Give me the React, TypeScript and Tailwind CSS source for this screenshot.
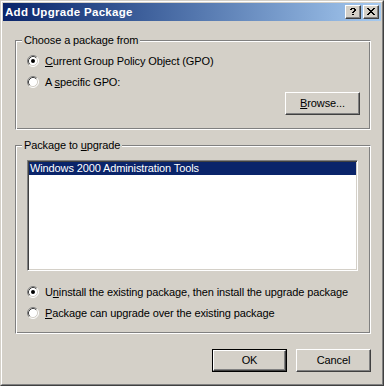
import React from "react";

function PixelGlyph({ rows, x, y }: { rows: string[]; x: number; y: number }) {
  const rects: React.ReactElement[] = [];
  rows.forEach((r, j) => {
    r.split("").forEach((c, i) => {
      if (c === "#") rects.push(<rect key={`${i}-${j}`} x={x + i} y={y + j} width={1} height={1} fill="#000" />);
    });
  });
  return <>{rects}</>;
}

const CLOSE = ["##....##", ".##..##.", "..####..", "...##...", "..####..", ".##..##.", "##....##"];
const HELP = [".####.", "##..##", "....##", "...##.", "..##..", "......", "..##.."];

function CaptionButton({ glyph, w }: { glyph: string[]; w: number }) {
  return (
    <div className="w-[16px] h-[14px] bg-[#d4d0c8] border border-white border-r-[#404040] border-b-[#404040] shadow-[inset_-1px_-1px_0_#808080]">
      <svg width="14" height="12" viewBox="0 0 14 12" shapeRendering="crispEdges" className="block">
        <PixelGlyph rows={glyph} x={Math.floor((14 - w) / 2)} y={2} />
      </svg>
    </div>
  );
}

function Radio({ checked }: { checked?: boolean }) {
  return (
    <svg width="12" height="12" viewBox="0 0 12 12" className="block shrink-0">
      <circle cx="6" cy="6" r="5" fill="#fff" />
      <path d="M2.11 9.89 A5.5 5.5 0 0 1 9.89 2.11" fill="none" stroke="#808080" strokeWidth="1" />
      <path d="M9.89 2.11 A5.5 5.5 0 0 1 2.11 9.89" fill="none" stroke="#fff" strokeWidth="1" />
      <path d="M2.82 9.18 A4.5 4.5 0 0 1 9.18 2.82" fill="none" stroke="#404040" strokeWidth="1" />
      <path d="M9.18 2.82 A4.5 4.5 0 0 1 2.82 9.18" fill="none" stroke="#d4d0c8" strokeWidth="1" />
      {checked && <circle cx="6" cy="6" r="2" fill="#000" />}
    </svg>
  );
}

function RadioRow({ checked, children, className }: { checked?: boolean; children: React.ReactNode; className: string }) {
  return (
    <div className={`ml-[11px] flex items-center h-[12px] gap-[6px] leading-[12px] ${className}`}>
      <Radio checked={checked} />
      <span className="whitespace-nowrap">{children}</span>
    </div>
  );
}

function Btn({ children, isDefault, className = "" }: { children: React.ReactNode; isDefault?: boolean; className?: string }) {
  if (isDefault) {
    return (
      <div className={`w-[75px] h-[23px] border border-black ${className}`}>
        <div className="w-full h-full border border-white border-r-[#404040] border-b-[#404040] shadow-[inset_-1px_-1px_0_#808080] flex items-center justify-center">
          {children}
        </div>
      </div>
    );
  }
  return (
    <div className={`w-[75px] h-[23px] border border-white border-r-[#404040] border-b-[#404040] shadow-[inset_-1px_-1px_0_#808080] flex items-center justify-center ${className}`}>
      {children}
    </div>
  );
}

const U = ({ children }: { children: React.ReactNode }) => (
  <span className="underline underline-offset-[1px]">{children}</span>
);

function Group({ label, className, children }: { label: React.ReactNode; className: string; children: React.ReactNode }) {
  return (
    <div className={`border border-[#808080] border-r-white border-b-white shadow-[inset_1px_1px_0_#fff,inset_-1px_-1px_0_#808080] flex flex-col ${className}`}>
      <span className="-mt-[7px] ml-[6px] px-[2px] bg-[#d4d0c8] self-start leading-[13px] whitespace-nowrap">{label}</span>
      {children}
    </div>
  );
}

export default function App() {
  return (
    <div className="w-[384px] h-[386px] bg-[#d4d0c8] border border-[#d4d0c8] border-r-[#404040] border-b-[#404040] font-['Liberation_Sans',Arial,sans-serif] text-[11px] leading-[13px] tracking-[-0.12px] text-black">
      <div className="h-full border border-white border-r-[#808080] border-b-[#808080] p-px flex flex-col">
        <div className="h-[18px] flex items-center justify-between pl-[2px] pr-[2px] bg-linear-to-r from-[#0a246a] to-[#a6caf0]">
          <span className="text-white font-bold whitespace-nowrap tracking-[0.3px] text-[11.5px]">Add Upgrade Package</span>
          <div className="flex gap-[2px]">
            <CaptionButton glyph={HELP} w={6} />
            <CaptionButton glyph={CLOSE} w={8} />
          </div>
        </div>
        <div className="pl-[12px] pr-[10px] pt-[19px] flex flex-col">
          <Group label="Choose a package from" className="h-[90px]">
            <RadioRow checked className="mt-[8px]">
              <U>C</U>urrent Group Policy Object (GPO)
            </RadioRow>
            <RadioRow className="mt-[9px]">
              A <U>s</U>pecific GPO:
            </RadioRow>
            <Btn className="mt-[4px] self-end mr-[10px]">
              <span>
                <U>B</U>rowse...
              </span>
            </Btn>
          </Group>
          <Group
            label={
              <>
                Package to <U>u</U>pgrade
              </>
            }
            className="h-[189px] mt-[15px]"
          >
            <div className="mt-[8px] ml-[11px] w-[331px] h-[111px] bg-white border border-[#808080] border-r-white border-b-white shadow-[inset_1px_1px_0_#404040,inset_-1px_-1px_0_#d4d0c8] p-px">
              <div className="h-[13px] bg-[#0a246a] text-white pl-[1px] leading-[13px] whitespace-nowrap">
                Windows 2000 Administration Tools
              </div>
            </div>
            <RadioRow checked className="mt-[15px]">
              U<U>n</U>install the existing package, then install the upgrade package
            </RadioRow>
            <RadioRow className="mt-[9px]">
              <U>P</U>ackage can upgrade over the existing package
            </RadioRow>
          </Group>
          <div className="mt-[15px] flex justify-end gap-[9px]">
            <Btn isDefault>OK</Btn>
            <Btn>Cancel</Btn>
          </div>
        </div>
      </div>
    </div>
  );
}
